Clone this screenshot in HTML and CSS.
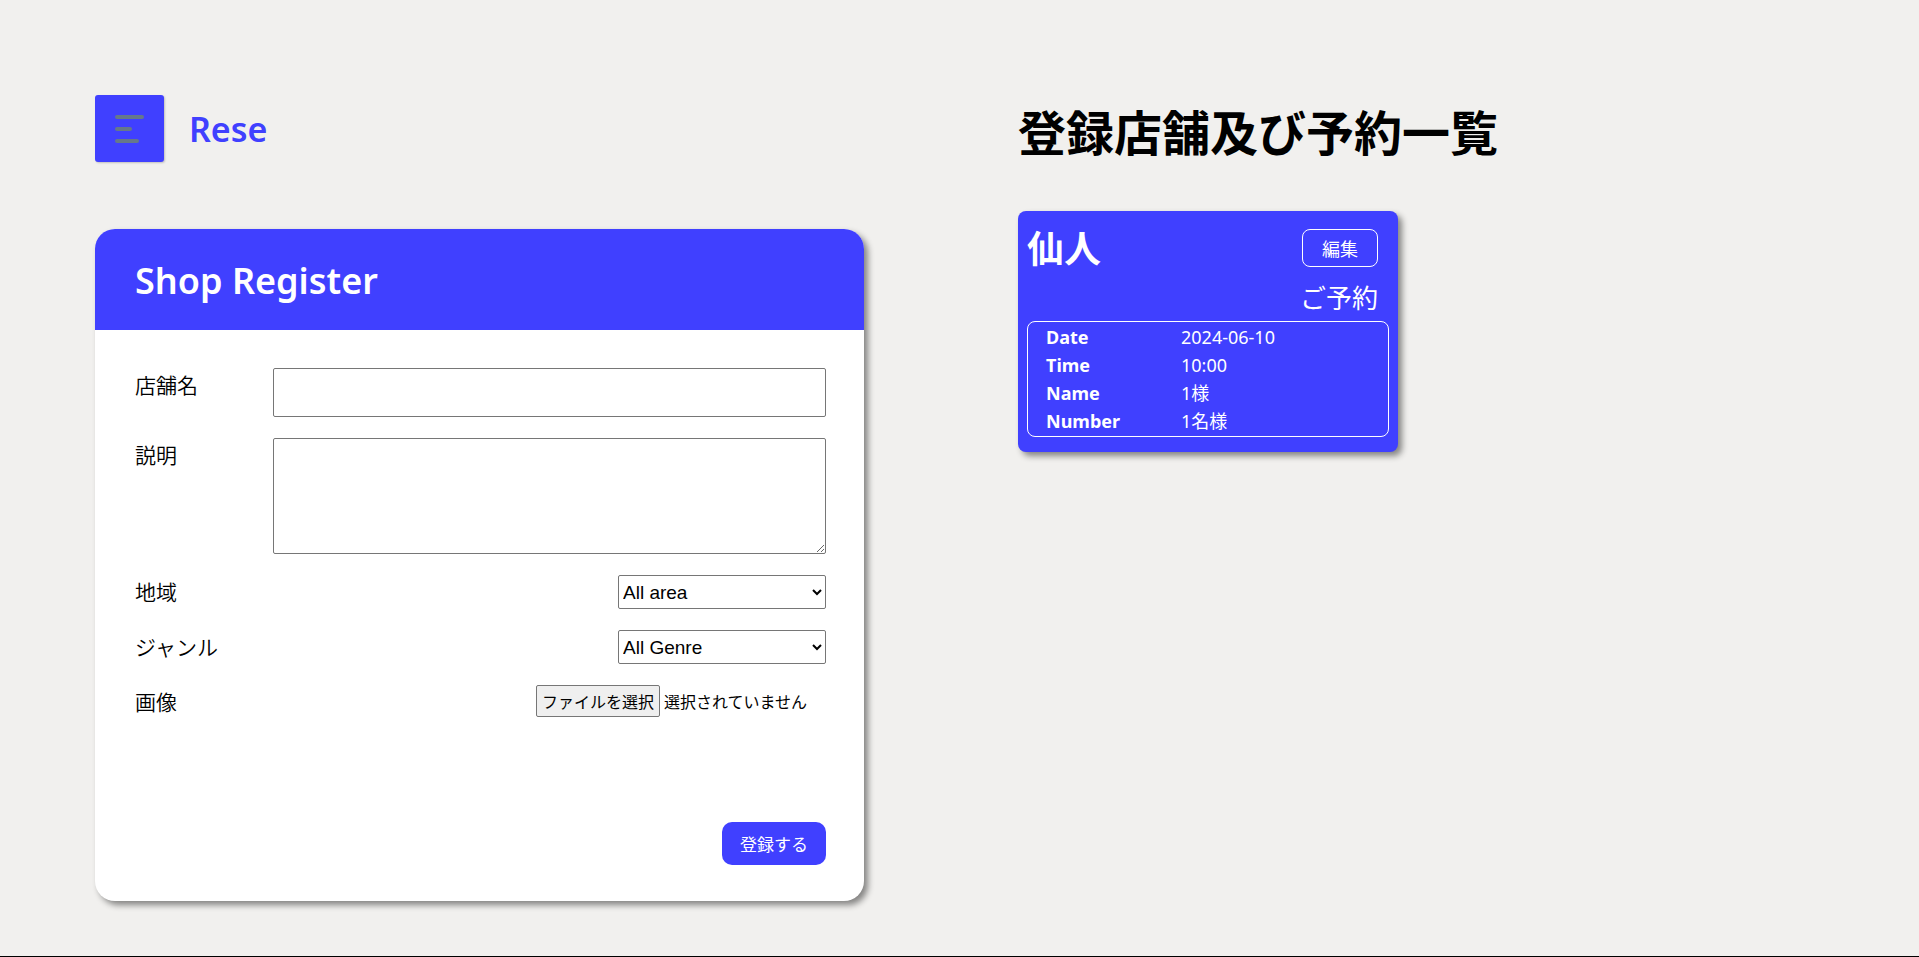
FILE: index.html
```html
<!DOCTYPE html>
<html lang="ja">
<head>
<meta charset="utf-8">
<title>Rese - Shop Register</title>
<link rel="stylesheet" href="styles.css">
</head>
<body>
<div class="page">
  <div class="left">
    <header class="top">
      <button class="menu" type="button" aria-label="menu">
        <span class="bar bar1"></span>
        <span class="bar bar2"></span>
        <span class="bar bar3"></span>
      </button>
      <span class="logo">Rese</span>
    </header>

    <section class="register">
      <h2 class="register-title">Shop Register</h2>
      <form class="register-form">
        <div class="row">
          <label class="row-label" for="name">店舗名</label>
          <input class="field" id="name" type="text">
        </div>
        <div class="row">
          <label class="row-label" for="desc">説明</label>
          <textarea class="field area" id="desc"></textarea>
        </div>
        <div class="row">
          <label class="row-label" for="area">地域</label>
          <select class="choice" id="area">
            <option>All area</option>
          </select>
        </div>
        <div class="row">
          <label class="row-label" for="genre">ジャンル</label>
          <select class="choice" id="genre">
            <option>All Genre</option>
          </select>
        </div>
        <div class="row">
          <span class="row-label">画像</span>
          <div class="file">
            <input class="file-input" id="image" type="file">
            <label class="file-btn" for="image">ファイルを選択</label>
            <span class="file-name">選択されていません</span>
          </div>
        </div>
        <div class="submit-row">
          <button class="submit" type="button">登録する</button>
        </div>
      </form>
    </section>
  </div>

  <div class="right">
    <h1 class="list-title">登録店舗及び予約一覧</h1>
    <div class="shop-card">
      <div class="card-head">
        <h3 class="shop-name">仙人</h3>
        <button class="edit" type="button">編集</button>
      </div>
      <p class="reserve-title">ご予約</p>
      <div class="reserve-box">
        <table class="reserve-table">
          <tr><th>Date</th><td>2024-06-10</td></tr>
          <tr><th>Time</th><td>10:00</td></tr>
          <tr><th>Name</th><td>1様</td></tr>
          <tr><th>Number</th><td>1名様</td></tr>
        </table>
      </div>
    </div>
  </div>
</div>
</body>
</html>
```

FILE: styles.css
```css
html, body {
  margin: 0;
  padding: 0;
}

body {
  background: #f1f0ee;
  font-family: "Noto Sans", "Noto Sans CJK JP", sans-serif;
  color: #000;
}

.page {
  display: flex;
  align-items: flex-start;
  min-height: 100vh;
  box-sizing: border-box;
  border-bottom: 1px solid #000;
  padding: 95px 0 0 95px;
}

.left {
  width: 769px;
}

.top {
  display: flex;
  align-items: center;
  gap: 25px;
  height: 67px;
}

.menu {
  width: 69px;
  height: 67px;
  background: #4040ff;
  border: none;
  border-radius: 3px;
  padding: 0 0 0 20px;
  display: flex;
  flex-direction: column;
  justify-content: center;
  align-items: flex-start;
  gap: 8px;
  box-shadow: 1px 1px 2px rgba(0, 0, 0, 0.2);
}

.bar {
  display: block;
  height: 4px;
  border-radius: 2px;
  background: #66788a;
}

.bar1 { width: 29px; }
.bar2 { width: 17px; }
.bar3 { width: 24px; }

.logo {
  color: #4040ff;
  font-size: 34px;
  font-weight: 600;
  line-height: 1;
}

.register {
  margin-top: 67px;
  background: #fff;
  border-radius: 20px;
  box-shadow: 4px 4px 6px rgba(0, 0, 0, 0.45);
  overflow: hidden;
}

.register-title {
  margin: 0;
  height: 101px;
  box-sizing: border-box;
  background: #4040ff;
  color: #fff;
  font-size: 36px;
  font-weight: 600;
  padding: 2px 0 0 40px;
  display: flex;
  align-items: center;
}

.register-form {
  padding: 38px 38px 36px 40px;
  display: flex;
  flex-direction: column;
  gap: 21px;
}

.row {
  display: flex;
  align-items: flex-start;
}

.row-label {
  flex: 0 0 138px;
  box-sizing: border-box;
  height: 34px;
  font-size: 21px;
  line-height: 34px;
  font-weight: 350;
}

.field {
  flex: 1;
  height: 49px;
  box-sizing: border-box;
  border: 1px solid #767676;
  border-radius: 2px;
  margin: 0;
  font-family: inherit;
  font-size: 16px;
}

.area {
  height: 116px;
}

.choice {
  margin: 0 0 0 auto;
  width: 208px;
  height: 34px;
  box-sizing: border-box;
  font-family: "Liberation Sans", Arial, sans-serif;
  font-size: 19px;
  border: 1px solid #767676;
  border-radius: 2px;
  background: #fff;
  color: #000;
}

.file {
  margin-left: auto;
  margin-right: 19px;
  display: flex;
  align-items: center;
  gap: 4px;
  font-size: 16px;
}

.file-input {
  display: none;
}

.file-btn {
  height: 32px;
  box-sizing: border-box;
  padding: 0 5px;
  background: #efefef;
  border: 1px solid #767676;
  border-radius: 2px;
  display: flex;
  align-items: center;
  font-size: 16px;
}

.file-name {
  font-size: 16px;
}

.submit-row {
  display: flex;
  justify-content: flex-end;
  margin-top: 82px;
}

.submit {
  width: 104px;
  height: 43px;
  background: #4040ff;
  color: #fff;
  border: none;
  border-radius: 10px;
  font-family: inherit;
  font-size: 17px;
  padding: 0;
}

.right {
  margin-left: 154px;
}

.list-title {
  margin: 9px 0 0;
  font-size: 48px;
  font-weight: 700;
  line-height: 1.2;
}

.shop-card {
  margin-top: 49px;
  width: 380px;
  box-sizing: border-box;
  padding: 9px 9px 15px;
  background: #4040ff;
  color: #fff;
  border-radius: 8px;
  box-shadow: 4px 4px 6px rgba(0, 0, 0, 0.45);
}

.card-head {
  display: flex;
  justify-content: space-between;
  align-items: center;
  padding-right: 11px;
}

.shop-name {
  margin: 0;
  font-size: 37px;
  font-weight: 700;
  line-height: 57px;
}

.edit {
  width: 76px;
  height: 38px;
  border: 1px solid #fff;
  border-radius: 8px;
  background: transparent;
  color: #fff;
  font-family: inherit;
  font-size: 18px;
  padding: 0;
}

.reserve-title {
  margin: 3px 11px 0 0;
  text-align: right;
  font-size: 26px;
  line-height: 36px;
}

.reserve-box {
  margin-top: 5px;
  border: 1px solid #fff;
  border-radius: 8px;
  padding: 1px 18px;
}

.reserve-table {
  border-collapse: collapse;
}

.reserve-table th,
.reserve-table td {
  padding: 0;
  font-size: 18px;
  line-height: 28px;
  text-align: left;
}

.reserve-table th {
  width: 135px;
  font-weight: 700;
}

.reserve-table td {
  font-weight: 400;
}
```
